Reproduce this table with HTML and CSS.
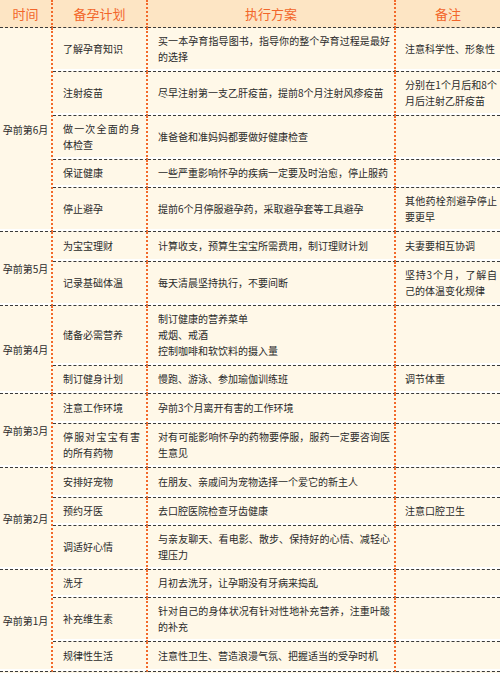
FILE: index.html
```html
<!DOCTYPE html>
<html lang="zh-CN">
<head>
<meta charset="utf-8">
<title>备孕计划</title>
<link rel="stylesheet" href="styles.css">
</head>
<body>
<table class="plan">
  <thead>
    <tr>
      <th class="c-time">时间</th>
      <th class="c-plan">备孕计划</th>
      <th class="c-act">执行方案</th>
      <th class="c-note">备注</th>
    </tr>
  </thead>
  <tbody>
    <tr>
      <td class="time" rowspan="5">孕前第6月</td>
      <td>了解孕育知识</td>
      <td>买一本孕育指导图书，指导你的整个孕育过程是最好的选择</td>
      <td>注意科学性、形象性</td>
    </tr>
    <tr>
      <td>注射疫苗</td>
      <td>尽早注射第一支乙肝疫苗，提前8个月注射风疹疫苗</td>
      <td>分别在1个月后和8个月后注射乙肝疫苗</td>
    </tr>
    <tr>
      <td>做一次全面的身体检查</td>
      <td>准爸爸和准妈妈都要做好健康检查</td>
      <td></td>
    </tr>
    <tr>
      <td>保证健康</td>
      <td>一些严重影响怀孕的疾病一定要及时治愈，停止服药</td>
      <td></td>
    </tr>
    <tr>
      <td>停止避孕</td>
      <td>提前6个月停服避孕药，采取避孕套等工具避孕</td>
      <td>其他药栓剂避孕停止要更早</td>
    </tr>

    <tr>
      <td class="time" rowspan="2">孕前第5月</td>
      <td class="tall">为宝宝理财</td>
      <td>计算收支，预算生宝宝所需费用，制订理财计划</td>
      <td>夫妻要相互协调</td>
    </tr>
    <tr>
      <td>记录基础体温</td>
      <td>每天清晨坚持执行，不要间断</td>
      <td>坚持3个月，了解自己的体温变化规律</td>
    </tr>

    <tr>
      <td class="time" rowspan="2">孕前第4月</td>
      <td>储备必需营养</td>
      <td>制订健康的营养菜单<br>戒烟、戒酒<br>控制咖啡和软饮料的摄入量</td>
      <td></td>
    </tr>
    <tr>
      <td>制订健身计划</td>
      <td>慢跑、游泳、参加瑜伽训练班</td>
      <td>调节体重</td>
    </tr>

    <tr>
      <td class="time" rowspan="2">孕前第3月</td>
      <td class="tall">注意工作环境</td>
      <td>孕前3个月离开有害的工作环境</td>
      <td></td>
    </tr>
    <tr>
      <td>停服对宝宝有害的所有药物</td>
      <td>对有可能影响怀孕的药物要停服，服药一定要咨询医生意见</td>
      <td></td>
    </tr>

    <tr>
      <td class="time" rowspan="3">孕前第2月</td>
      <td class="tall">安排好宠物</td>
      <td>在朋友、亲戚间为宠物选择一个爱它的新主人</td>
      <td></td>
    </tr>
    <tr>
      <td>预约牙医</td>
      <td>去口腔医院检查牙齿健康</td>
      <td>注意口腔卫生</td>
    </tr>
    <tr>
      <td>调适好心情</td>
      <td>与亲友聊天、看电影、散步、保持好的心情、减轻心理压力</td>
      <td></td>
    </tr>

    <tr>
      <td class="time" rowspan="3">孕前第1月</td>
      <td>洗牙</td>
      <td>月初去洗牙，让孕期没有牙病来捣乱</td>
      <td></td>
    </tr>
    <tr>
      <td>补充维生素</td>
      <td>针对自己的身体状况有针对性地补充营养，注重叶酸的补充</td>
      <td></td>
    </tr>
    <tr>
      <td class="tall">规律性生活</td>
      <td>注意性卫生、营造浪漫气氛、把握适当的受孕时机</td>
      <td></td>
    </tr>
  </tbody>
</table>
</body>
</html>
```

FILE: styles.css
```css
html, body {
  margin: 0;
  padding: 0;
  background: #fff8e8;
}

.plan {
  width: 500px;
  table-layout: fixed;
  border-collapse: separate;
  border-spacing: 0;
  font-family: "Noto Sans CJK SC", "Noto Sans", sans-serif;
  color: #2a2a2a;
}

.plan th,
.plan td {
  box-sizing: border-box;
  border-right: 2px dotted #f2692a;
  border-bottom: 1px dashed #3a3a3a;
  vertical-align: middle;
}

.plan th:last-child,
.plan td:last-child {
  border-right: none;
}

.plan th {
  height: 28px;
  padding: 0;
  background: #fde5c4;
  color: #f2652a;
  font-size: 13px;
  font-weight: normal;
  text-align: center;
  line-height: 16px;
}

.c-time { width: 53px; }
.c-plan { width: 95px; }
.c-act  { width: 248px; }
.c-note { width: 104px; }

.plan td {
  background: #fff8e8;
  box-shadow: inset 0 -2px 0 #fff;
  font-size: 10px;
  line-height: 16px;
  padding: 5px 0 6px;
  text-align: justify;
}

.plan td.tall {
  padding-top: 6px;
  padding-bottom: 7px;
}

.plan td:nth-last-child(3) {
  padding-left: 10px;
  padding-right: 6px;
}

.plan td:nth-last-child(2) {
  padding-left: 10px;
  padding-right: 4px;
}

.plan td:last-child {
  padding-left: 9px;
  padding-right: 3px;
}

.plan td.time {
  padding: 0;
  text-align: center;
  white-space: nowrap;
}
```
